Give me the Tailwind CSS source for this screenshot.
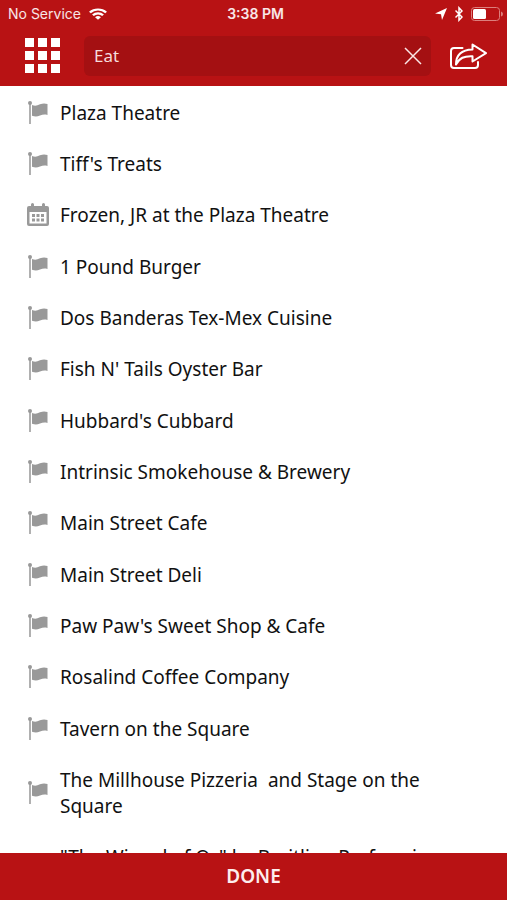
<!DOCTYPE html>
<html lang="en">
<head>
<meta charset="utf-8">
<meta name="viewport" content="width=device-width, initial-scale=1">
<title>Search</title>
<script src="https://cdn.jsdelivr.net/npm/@tailwindcss/browser@4"></script>
</head>
<body class="flex h-screen flex-col overflow-hidden bg-white font-['Noto_Sans',sans-serif] text-[#111]">
<svg class="hidden" aria-hidden="true">
  <symbol id="flag" viewBox="0 0 22 24">
    <path fill="#b0b0b0" d="M2 3h2v20H2z"/>
    <circle cx="3" cy="2" r="2" fill="#999"/>
    <path fill="#999" d="M5 4c3 1.200 5 .8 8-.7 2.500-1 5-1 7.500-.3v11c-3-.8-5-.4-7.500.6-3 1.200-5 1.200-8 .2z"/>
  </symbol>
  <symbol id="calendar" viewBox="0 0 22 24">
    <path fill="#999" fill-rule="evenodd" d="M2 3h2V1.500a1.500 1.500 0 0 1 3 0V3h8V1.500a1.500 1.500 0 0 1 3 0V3h2q2 0 2 2v16q0 2-2 2H2q-2 0-2-2V5q0-2 2-2zm.5 6v11.500h17V9z"/>
    <path fill="#999" d="M5 11h3v3H5zm4.500 0h3v3h-3zm4.500 0h3v3h-3zM5 15.500h3v3H5zm4.500 0h3v3h-3zm4.500 0h3v3h-3z"/>
  </symbol>
</svg>

<header class="shrink-0 bg-[#b81214] text-white">
  <div class="grid h-7 grid-cols-3 items-center pl-2 pr-1 font-[Inter,sans-serif] text-sm text-white/90">
    <div class="flex items-center gap-2">
      <span class="whitespace-nowrap">No Service</span>
      <svg class="h-3 w-[18px]" viewBox="0 0 16 12" preserveAspectRatio="none" fill="none" stroke="#fff" stroke-width="2.200" aria-label="Wi-Fi">
        <path d="M.8 4.500a10.200 10.200 0 0 1 14.400 0M3.500 7.300a6.400 6.400 0 0 1 9 0"/>
        <path d="M8 11.800 5.400 9.200a3.700 3.700 0 0 1 5.200 0z" fill="#fff" stroke="none"/>
      </svg>
    </div>
    <div class="text-center font-semibold">3:38 PM</div>
    <div class="flex items-center justify-end gap-2">
      <svg class="h-3 w-3" viewBox="0 0 12 12" fill="#fff" aria-label="Location"><path d="M12 0 7 12 6 6.200 0 5.500z"/></svg>
      <svg class="h-4 w-2" viewBox="0 0 8 16" fill="none" stroke="#fff" stroke-width="1.500" aria-label="Bluetooth"><path d="M.5 4.500 7 11l-3 3.200V1.800L7 5 .5 11.500"/></svg>
      <svg class="h-4 w-8" viewBox="0 0 32 16" aria-label="Battery">
        <rect x=".5" y="1.500" width="28" height="13" rx="3" fill="none" stroke="#dc7f7d"/>
        <rect x="2" y="3" width="13" height="10" rx="1.500" fill="#fff"/>
        <path d="M30 5.500q2 .5 2 2.500t-2 2.500z" fill="#dc7f7d"/>
      </svg>
    </div>
  </div>
  <div class="flex h-[58px] items-center pb-0.5 pl-6 pr-4">
    <button type="button" aria-label="Menu" class="shrink-0">
      <svg class="size-9" viewBox="0 0 36 36" fill="#fff"><path d="M1 0h9v9H1zm13 0h9v9h-9zm13 0h9v9h-9zM1 13h9v9H1zm13 0h9v9h-9zm13 0h9v9h-9zM1 26h9v9H1zm13 0h9v9h-9zm13 0h9v9h-9z"/></svg>
    </button>
    <div class="ml-6 flex h-10 min-w-0 flex-1 items-center rounded-md bg-[#a41012] pl-2.5 pr-2">
      <input type="text" aria-label="Search" value="Eat" class="min-w-0 flex-1 bg-transparent text-[17px] text-[#f6dcdc] outline-none">
      <button type="button" aria-label="Clear" class="shrink-0">
        <svg class="size-5" viewBox="0 0 20 20" fill="none" stroke="#fbe6e6" stroke-width="1.500"><path d="m2 2 16 16M18 2 2 18"/></svg>
      </button>
    </div>
    <button type="button" aria-label="Share" class="ml-4 shrink-0">
      <svg class="h-8 w-11" viewBox="0 0 44 32" fill="none" stroke="#fff" stroke-width="2" stroke-linejoin="round" stroke-linecap="round">
        <path d="M15.500 8H7q-3 0-3 3v14q0 3 3 3h21q3 0 3-3v-3"/>
        <path d="M9 24.500C9 15.500 14 9.800 25.500 9.500V4.500L39 13.200 25.500 21.500v-5.300C17 15.800 12.500 18 9 24.500z"/>
      </svg>
    </button>
  </div>
</header>

<main class="min-h-0 flex-1 overflow-hidden">
  <ul class="pl-[27px] pr-14 text-[19px] leading-[26px] [&>li]:flex [&>li]:items-center [&>li]:gap-[11px] [&>li]:pb-[11px] [&>li]:pt-[14px] [&>li:nth-child(3n)]:pb-3 [&_svg]:h-6 [&_svg]:w-[22px] [&_svg]:shrink-0 [&_a]:whitespace-pre-wrap">
    <li><svg><use href="#flag"/></svg><a href="#">Plaza Theatre</a></li>
    <li><svg><use href="#flag"/></svg><a href="#">Tiff's Treats</a></li>
    <li><svg><use href="#calendar"/></svg><a href="#">Frozen, JR at the Plaza Theatre</a></li>
    <li><svg><use href="#flag"/></svg><a href="#">1 Pound Burger</a></li>
    <li><svg><use href="#flag"/></svg><a href="#">Dos Banderas Tex-Mex Cuisine</a></li>
    <li><svg><use href="#flag"/></svg><a href="#">Fish N' Tails Oyster Bar</a></li>
    <li><svg><use href="#flag"/></svg><a href="#">Hubbard's Cubbard</a></li>
    <li><svg><use href="#flag"/></svg><a href="#">Intrinsic Smokehouse &amp; Brewery</a></li>
    <li><svg><use href="#flag"/></svg><a href="#">Main Street Cafe</a></li>
    <li><svg><use href="#flag"/></svg><a href="#">Main Street Deli</a></li>
    <li><svg><use href="#flag"/></svg><a href="#">Paw Paw's Sweet Shop &amp; Cafe</a></li>
    <li><svg><use href="#flag"/></svg><a href="#">Rosalind Coffee Company</a></li>
    <li><svg><use href="#flag"/></svg><a href="#">Tavern on the Square</a></li>
    <li><svg><use href="#flag"/></svg><a href="#">The Millhouse Pizzeria  and Stage on the Square</a></li>
    <li><svg><use href="#calendar"/></svg><a href="#">"The Wizard of Oz" by Breitling Performing Arts</a></li>
  </ul>
</main>

<footer class="shrink-0 bg-[#b81214]">
  <button type="button" class="h-[47px] w-full text-center text-[19px] font-semibold text-[#fdeeee]">DONE</button>
</footer>
</body>
</html>
